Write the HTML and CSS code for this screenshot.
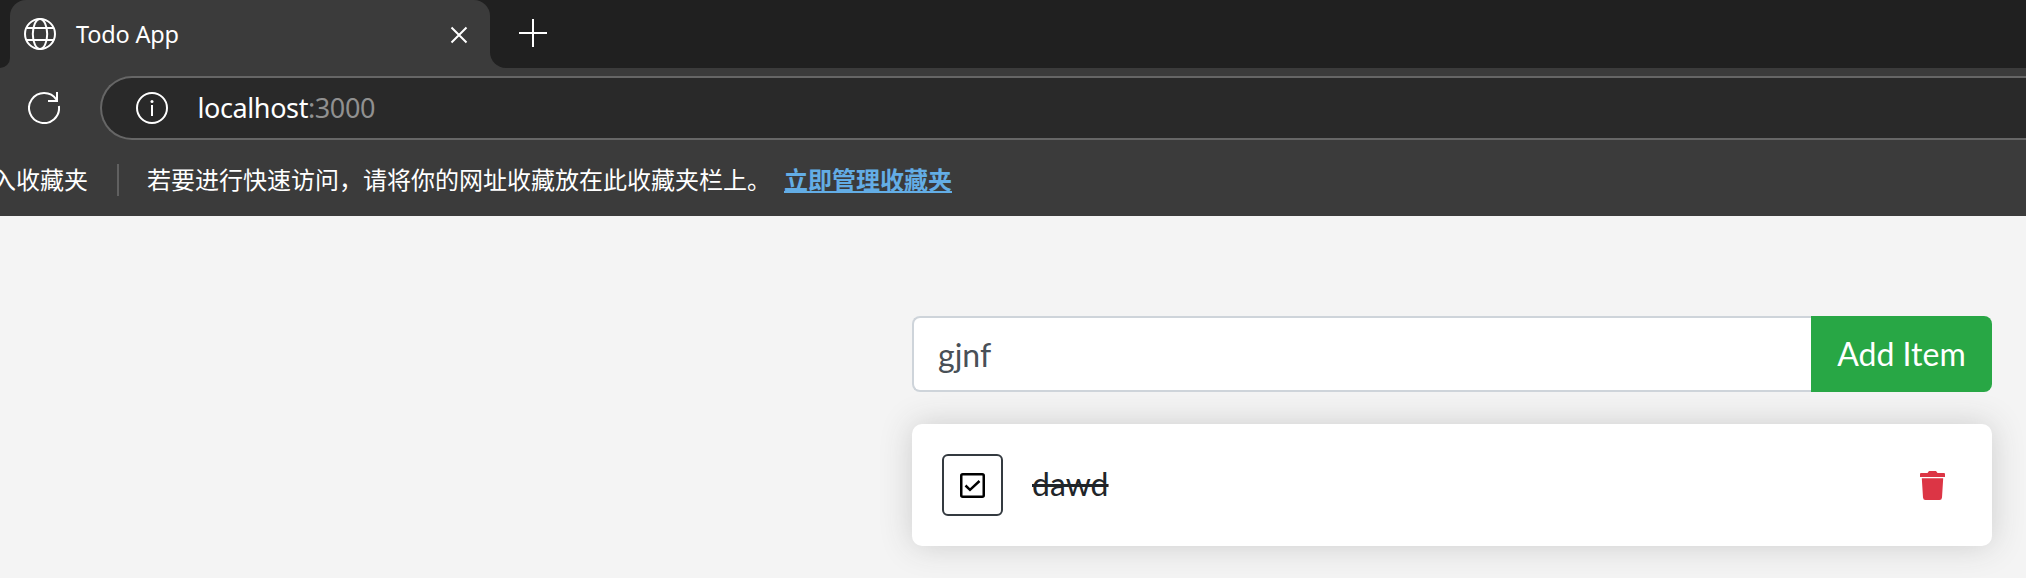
FILE: index.html
```html
<!DOCTYPE html>
<html lang="zh-CN">
<head>
<meta charset="utf-8">
<title>Todo App</title>
<link rel="stylesheet" href="styles.css">
</head>
<body>
<header class="browser">
  <div class="tabstrip">
    <div class="strip-edge"></div>
    <div class="tab">
      <svg class="icon32" viewBox="0 0 32 32"><g fill="none" stroke="#fff" stroke-width="2"><circle cx="16" cy="16" r="15"/><ellipse cx="16" cy="16" rx="7.2" ry="15"/><path d="M2.500 10h27M2.500 22h27"/></g></svg>
      <span class="tab-title">Todo App</span>
      <svg class="close" viewBox="0 0 18 18"><path d="M1.500 1.500l15 15M16.500 1.500l-15 15" stroke="#fff" stroke-width="2"/></svg>
    </div>
    <div class="strip-rest">
      <svg class="plus" viewBox="0 0 28 28"><path d="M14 0v28M0 14h28" stroke="#fff" stroke-width="2"/></svg>
    </div>
  </div>
  <div class="toolbar">
    <svg class="icon32" viewBox="0 0 32 32"><g fill="none" stroke="#fff" stroke-width="2"><path d="M30.900 14A15 15 0 1 1 28.500 7.700"/><path d="M29 0v9h-9"/></g></svg>
    <div class="address">
      <svg class="icon32" viewBox="0 0 32 32"><circle cx="16" cy="16" r="15" fill="none" stroke="#fff" stroke-width="2"/><path d="M16 13v11" stroke="#fff" stroke-width="2"/><circle cx="16" cy="9.500" r="1.500" fill="#fff"/></svg>
      <span class="url"><span class="host">localhost</span><span class="port">:3000</span></span>
    </div>
  </div>
  <div class="bookmarks">
    <span class="import">入收藏夹</span>
    <span class="divider"></span>
    <span class="hint">若要进行快速访问，请将你的网址收藏放在此收藏夹栏上。</span>
    <a class="manage">立即管理收藏夹</a>
  </div>
</header>
<main class="page">
  <div class="add-form">
    <div class="field">gjnf</div>
    <div class="add-button">Add Item</div>
  </div>
  <div class="item">
    <div class="toggle">
      <svg class="check" viewBox="0 0 25 25"><g fill="none" stroke="#000" stroke-width="2.500"><rect x="1.250" y="1.250" width="22.500" height="22.500" rx="1.500"/><path d="M5.500 12.500l4.500 4.300L19.500 8"/></g></svg>
    </div>
    <span class="name">dawd</span>
    <svg class="trash" viewBox="0 0 25 29"><path fill="#dc3545" d="M9 0h7l1.500 2H24q1 0 1 1v3H0V3q0-1 1-1h6.500zM1.800 7.200h21.400l-1.200 19.300q-.2 2.500-2.500 2.500h-14Q3.200 29 3 26.500z"/></svg>
  </div>
</main>
</body>
</html>
```
FILE: styles.css
```css
* { box-sizing: border-box; }
body {
  margin: 0;
  height: 578px;
  overflow: hidden;
  background: #f4f4f4;
  font-family: Lato, sans-serif;
}
svg { display: block; flex: none; }
.browser {
  height: 216px;
  background: #3b3b3b;
  color: #fff;
  font-family: "Noto Sans", "Noto Sans CJK SC", sans-serif;
}
.tabstrip { display: flex; height: 68px; }
.strip-edge { width: 10px; background: #202020; border-bottom-right-radius: 16px; }
.tab {
  display: flex;
  align-items: center;
  width: 480px;
  padding: 0 22px 0 14px;
  background: linear-gradient(#202020, #202020) top / 100% 20px no-repeat;
  position: relative;
  z-index: 0;
}
.tab::before {
  content: "";
  position: absolute;
  inset: 0;
  z-index: -1;
  background: #3b3b3b;
  border-radius: 16px 16px 0 0;
}
.icon32 { width: 32px; height: 32px; }
.tab-title { margin-left: 20px; padding-bottom: 1px; font-size: 23.5px; letter-spacing: -0.2px; line-height: 32px; }
.close { width: 18px; height: 18px; margin: 2px 0 0 auto; }
.strip-rest { flex: 1; padding: 19px 0 0 29px; background: #202020; border-bottom-left-radius: 16px; }
.plus { width: 28px; height: 28px; }
.toolbar { display: flex; align-items: center; padding: 8px 0 0 28px; }
.address {
  display: flex;
  align-items: center;
  flex: 1;
  height: 64px;
  margin-left: 40px;
  padding-left: 34px;
  border: 2px solid #666;
  border-right: 0;
  border-radius: 32px 0 0 32px;
  background: #292929;
}
.url { margin-left: 29.5px; font-size: 27px; letter-spacing: -0.4px; line-height: 36px; }
.port { color: #909090; }
.bookmarks {
  display: flex;
  align-items: center;
  height: 76px;
  padding-top: 4px;
  font-family: "Noto Sans CJK SC", sans-serif;
  font-size: 24px;
  line-height: 32px;
  white-space: nowrap;
}
.import, .hint, .manage { padding-bottom: 2px; }
.import { margin-left: -8px; }
.divider { width: 2px; height: 32px; margin: 0 28px 0 29px; background: #606060; }
.manage { margin-left: 13px; color: #63ade5; font-weight: 700; text-decoration: underline; text-decoration-thickness: 2px; text-underline-offset: 2px; }
.page { width: 1080px; margin: 100px 34px 0 912px; font-size: 32px; color: #212529; }
.add-form { display: flex; height: 76px; }
.field {
  flex: 1;
  padding: 13px 24px 11px;
  border: 2px solid #ced4da;
  border-right: 0;
  border-radius: 8px 0 0 8px;
  background: #fff;
  color: #495057;
  line-height: 48px;
}
.add-button {
  width: 181px;
  padding: 14px 0;
  border-radius: 0 8px 8px 0;
  background: #28a745;
  color: #fff;
  line-height: 48px;
  text-align: center;
}
.item {
  display: flex;
  align-items: center;
  height: 122px;
  margin-top: 32px;
  padding: 0 47px 0 30px;
  border-radius: 10px;
  background: #fff;
  box-shadow: 0 0 32px #ccc;
}
.toggle {
  display: flex;
  align-items: center;
  justify-content: center;
  width: 61px;
  height: 62px;
  border: 2px solid #343a40;
  border-radius: 6px;
}
.check { width: 25px; height: 25px; }
.name { margin-left: 29px; padding-bottom: 2px; line-height: 48px; text-decoration: line-through; }
.trash { width: 25px; height: 29px; margin-left: auto; }
```
